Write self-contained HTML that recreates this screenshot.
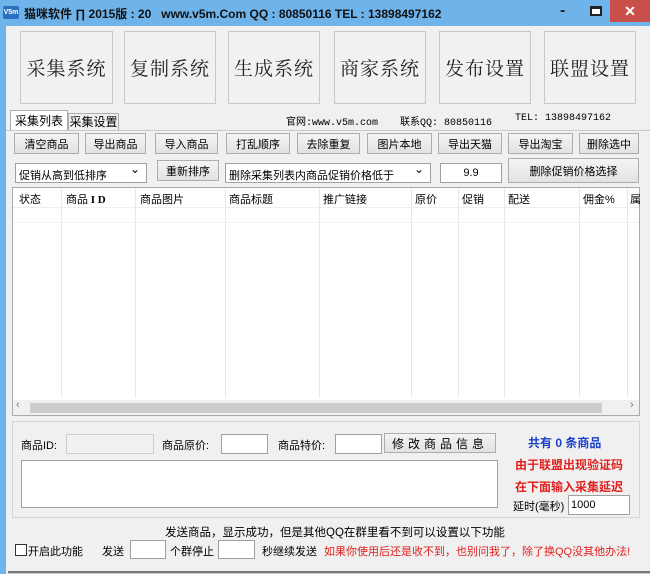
<!DOCTYPE html>
<html><head><meta charset="utf-8"><style>
*{margin:0;padding:0;box-sizing:border-box}
body{width:650px;height:574px;background:#f0f0f0;position:relative;overflow:hidden;font-family:"Liberation Sans","Noto Sans CJK SC",sans-serif;font-size:11px;color:#000}
.a{position:absolute;white-space:nowrap}
.btn{position:absolute;border:1px solid #adadad;background:linear-gradient(#f4f4f4,#e2e2e2);display:flex;align-items:center;justify-content:center;font-size:11px}
.big{position:absolute;top:31px;height:73px;border:1px solid #c8c8c8;background:#f1f1f1;display:flex;align-items:center;justify-content:center;font-family:"Noto Serif CJK SC",serif;font-size:19px;letter-spacing:1px;color:#222}
.inp{position:absolute;border:1px solid #a0a0a0;background:#fff}
.sel{position:absolute;border:1px solid #a0a0a0;background:#fff;font-size:11px;padding:3px 3px}
.sel:after{content:"⌄";position:absolute;right:6px;top:-2px;font-size:12px}
.col{position:absolute;top:188px;height:210px;border-left:1px solid #e8e8e8}
.red{color:#e0201e}
.m{font-size:10px;font-family:'Liberation Mono','Noto Sans CJK SC',monospace;top:113px}
</style></head><body>
<div class="a" style="left:0;top:0;width:650px;height:26px;background:#6eb3ea"></div>
<div class="a" style="left:0;top:26px;width:6px;height:548px;background:#6eb3ea"></div>
<div class="a" style="left:3px;top:6px;width:16px;height:13px;background:#2a6fc0;border-radius:2px;color:#fff;font-size:7px;line-height:13px;text-align:center;font-weight:bold">V5m</div>
<div class="a" style="left:24px;top:5px;font-weight:bold;font-size:12px;color:#111">猫咪软件 ∏ 2015版 : 20 &nbsp;&nbsp;www.v5m.Com QQ : 80850116 TEL : 13898497162</div>
<div class="a" style="left:560px;top:2px;font-size:16px;font-weight:bold;color:#222">-</div>
<div class="a" style="left:590px;top:6px;width:12px;height:10px;border:2px solid #222;border-top-width:3px;background:#fff"></div>
<div class="a" style="left:610px;top:0;width:40px;height:22px;background:#c9504a;color:#fff;text-align:center;font-size:14px;line-height:22px;font-weight:bold">✕</div>

<div class="big" style="left:20px;width:93px">采集系统</div>
<div class="big" style="left:124px;width:92px">复制系统</div>
<div class="big" style="left:228px;width:92px">生成系统</div>
<div class="big" style="left:334px;width:92px">商家系统</div>
<div class="big" style="left:439px;width:92px">发布设置</div>
<div class="big" style="left:544px;width:92px">联盟设置</div>

<div class="a" style="left:10px;top:110px;width:58px;height:20px;border:1px solid #adadad;border-bottom:none;background:#fff;text-align:center;line-height:20px;font-size:12px">采集列表</div>
<div class="a" style="left:68px;top:113px;width:51px;height:17px;border:1px solid #adadad;border-bottom:none;text-align:center;line-height:17px;font-size:12px">采集设置</div>
<div class="a" style="left:6px;top:130px;width:644px;height:390px;border-top:1px solid #c8c8c8"></div>
<div class="a m" style="left:286px">官网:www.v5m.com</div>
<div class="a m" style="left:400px">联系QQ: 80850116</div>
<div class="a m" style="left:515px">TEL: 13898497162</div>

<div class="btn" style="left:14px;top:133px;width:65px;height:21px">清空商品</div>
<div class="btn" style="left:85px;top:133px;width:61px;height:21px">导出商品</div>
<div class="btn" style="left:155px;top:133px;width:63px;height:21px">导入商品</div>
<div class="btn" style="left:226px;top:133px;width:64px;height:21px">打乱顺序</div>
<div class="btn" style="left:297px;top:133px;width:63px;height:21px">去除重复</div>
<div class="btn" style="left:367px;top:133px;width:65px;height:21px">图片本地</div>
<div class="btn" style="left:438px;top:133px;width:64px;height:21px">导出天猫</div>
<div class="btn" style="left:508px;top:133px;width:65px;height:21px">导出淘宝</div>
<div class="btn" style="left:579px;top:133px;width:60px;height:21px">删除选中</div>

<div class="sel" style="left:15px;top:163px;width:132px;height:20px">促销从高到低排序</div>
<div class="btn" style="left:157px;top:160px;width:62px;height:21px">重新排序</div>
<div class="sel" style="left:225px;top:163px;width:206px;height:20px">删除采集列表内商品促销价格低于</div>
<div class="inp" style="left:440px;top:163px;width:62px;height:20px;text-align:center;line-height:18px;font-size:11px">9.9</div>
<div class="btn" style="left:508px;top:158px;width:131px;height:25px">删除促销价格选择</div>

<div class="a" style="left:12px;top:187px;width:628px;height:229px;border:1px solid #aaa;background:#fff"></div>
<div class="col" style="left:61px"></div><div class="col" style="left:135px"></div><div class="col" style="left:225px"></div><div class="col" style="left:319px"></div><div class="col" style="left:411px"></div><div class="col" style="left:458px"></div><div class="col" style="left:504px"></div><div class="col" style="left:579px"></div><div class="col" style="left:627px"></div>
<div class="a" style="left:13px;top:207px;width:626px;border-top:1px solid #eee"></div>
<div class="a" style="left:13px;top:222px;width:626px;border-top:1px solid #f2f2f2"></div>
<div class="a" style="left:19px;top:191px">状态</div>
<div class="a" style="left:66px;top:191px">商品<b style="font-family:'Liberation Serif',serif"> I D</b></div>
<div class="a" style="left:140px;top:191px">商品图片</div>
<div class="a" style="left:229px;top:191px">商品标题</div>
<div class="a" style="left:323px;top:191px">推广链接</div>
<div class="a" style="left:415px;top:191px">原价</div>
<div class="a" style="left:462px;top:191px">促销</div>
<div class="a" style="left:508px;top:191px">配送</div>
<div class="a" style="left:583px;top:191px">佣金%</div>
<div class="a" style="left:630px;top:191px">属</div>
<div class="a" style="left:13px;top:400px;width:626px;height:15px;background:#f0f0f0"></div>
<div class="a" style="left:30px;top:403px;width:572px;height:10px;background:#cdcdcd"></div>
<div class="a" style="left:16px;top:399px;color:#777">‹</div>
<div class="a" style="left:630px;top:399px;color:#777">›</div>

<div class="a" style="left:12px;top:421px;width:628px;height:97px;border:1px solid #d5d5d5"></div>
<div class="a" style="left:21px;top:437px">商品ID:</div>
<div class="inp" style="left:66px;top:434px;width:88px;height:20px;background:#f0f0f0;border-color:#ccc"></div>
<div class="a" style="left:162px;top:437px">商品原价:</div>
<div class="inp" style="left:221px;top:434px;width:47px;height:20px"></div>
<div class="a" style="left:278px;top:437px">商品特价:</div>
<div class="inp" style="left:335px;top:434px;width:47px;height:20px"></div>
<div class="btn" style="left:384px;top:433px;width:112px;height:20px;letter-spacing:4px;font-size:12px">修改商品信息</div>
<div class="inp" style="left:21px;top:460px;width:477px;height:48px"></div>
<div class="a" style="left:528px;top:434px;color:#1a3fc8;font-weight:bold;font-size:12px">共有 0 条商品</div>
<div class="a red" style="left:515px;top:456px;font-weight:bold;font-size:12px">由于联盟出现验证码</div>
<div class="a red" style="left:515px;top:478px;font-weight:bold;font-size:12px">在下面输入采集延迟</div>
<div class="a" style="left:513px;top:498px">延时(毫秒)</div>
<div class="inp" style="left:568px;top:495px;width:62px;height:20px;font-size:11px;padding:3px 2px">1000</div>

<div class="a" style="left:165px;top:524px;font-size:11.5px">发送商品，显示成功，但是其他QQ在群里看不到可以设置以下功能</div>
<div class="a" style="left:15px;top:544px;width:12px;height:12px;border:1px solid #333;background:#fff"></div>
<div class="a" style="left:28px;top:543px">开启此功能</div>
<div class="a" style="left:102px;top:543px">发送</div>
<div class="inp" style="left:130px;top:540px;width:36px;height:19px"></div>
<div class="a" style="left:170px;top:543px">个群停止</div>
<div class="inp" style="left:218px;top:540px;width:37px;height:19px"></div>
<div class="a" style="left:262px;top:543px">秒继续发送</div>
<div class="a red" style="left:324px;top:543px">如果你使用后还是收不到，也别问我了，除了换QQ没其他办法!</div>
<div class="a" style="left:8px;top:571px;width:642px;height:3px;border-top:2px solid #777;background:#ccc"></div>
</body></html>
